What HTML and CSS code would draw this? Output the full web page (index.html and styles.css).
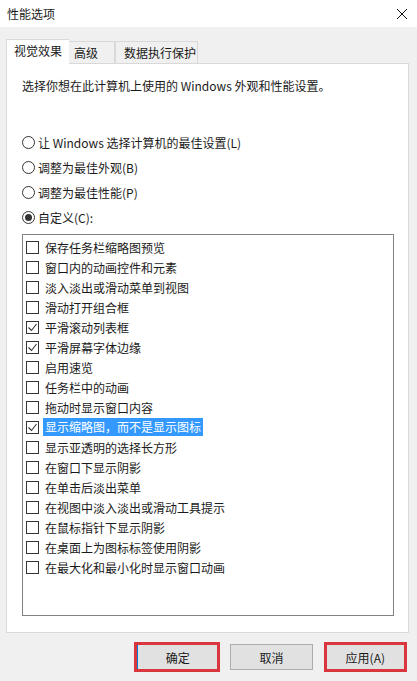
FILE: index.html
```html
<!DOCTYPE html>
<html>
<head>
    <title>性能选项</title>
    <link rel="stylesheet" href="styles.css">
</head>
<body>
    <div class="titlebar">
        <span class="title">性能选项</span>
        <svg class="close" width="12" height="12" viewBox="0 0 12 12">
            <path d="M1 1 L11 11 M11 1 L1 11" stroke="#111" stroke-width="1" fill="none"/>
        </svg>
    </div>

    <div class="tabs">
        <div class="tab tab-active">视觉效果</div>
        <div class="tab tab-adv">高级</div>
        <div class="tab tab-dep">数据执行保护</div>
    </div>

    <div class="panel">
        <p class="intro">选择你想在此计算机上使用的 Windows 外观和性能设置。</p>

        <div class="radios">
            <div class="radio-row"><span class="radio"></span>让 Windows 选择计算机的最佳设置(L)</div>
            <div class="radio-row"><span class="radio"></span>调整为最佳外观(B)</div>
            <div class="radio-row"><span class="radio"></span>调整为最佳性能(P)</div>
            <div class="radio-row"><span class="radio on"></span>自定义(C):</div>
        </div>

        <div class="listbox">
            <div class="item"><span class="check"></span>保存任务栏缩略图预览</div>
            <div class="item"><span class="check"></span>窗口内的动画控件和元素</div>
            <div class="item"><span class="check"></span>淡入淡出或滑动菜单到视图</div>
            <div class="item"><span class="check"></span>滑动打开组合框</div>
            <div class="item"><span class="check"><svg width="11" height="11" viewBox="0 0 11 11"><path d="M1.5 5.5 L4.5 8.5 L9.5 2" stroke="#333" stroke-width="1.1" fill="none"/></svg></span>平滑滚动列表框</div>
            <div class="item"><span class="check"><svg width="11" height="11" viewBox="0 0 11 11"><path d="M1.5 5.5 L4.5 8.5 L9.5 2" stroke="#333" stroke-width="1.1" fill="none"/></svg></span>平滑屏幕字体边缘</div>
            <div class="item"><span class="check"></span>启用速览</div>
            <div class="item"><span class="check"></span>任务栏中的动画</div>
            <div class="item"><span class="check"></span>拖动时显示窗口内容</div>
            <div class="item"><span class="check"><svg width="11" height="11" viewBox="0 0 11 11"><path d="M1.5 5.5 L4.5 8.5 L9.5 2" stroke="#333" stroke-width="1.1" fill="none"/></svg></span><span class="selected">显示缩略图，而不是显示图标</span></div>
            <div class="item"><span class="check"></span>显示亚透明的选择长方形</div>
            <div class="item"><span class="check"></span>在窗口下显示阴影</div>
            <div class="item"><span class="check"></span>在单击后淡出菜单</div>
            <div class="item"><span class="check"></span>在视图中淡入淡出或滑动工具提示</div>
            <div class="item"><span class="check"></span>在鼠标指针下显示阴影</div>
            <div class="item"><span class="check"></span>在桌面上为图标标签使用阴影</div>
            <div class="item"><span class="check"></span>在最大化和最小化时显示窗口动画</div>
        </div>
    </div>

    <div class="buttons">
        <button class="btn btn-default marked">确定</button>
        <button class="btn">取消</button>
        <button class="btn marked btn-apply">应用(A)</button>
    </div>
</body>
</html>
```

FILE: styles.css
```css
body {
    margin: 0;
    width: 417px;
    height: 681px;
    background: #f0f0f0;
    font-family: "Noto Sans CJK SC", "Microsoft YaHei", sans-serif;
    font-size: 12px;
    color: #1a1a1a;
    overflow: hidden;
}
.titlebar {
    height: 27px;
    background: #fff;
    display: flex;
    align-items: center;
    justify-content: space-between;
    padding: 0 8px 0 7px;
}
.title {
    line-height: 27px;
}
.close {
    margin-right: 1px;
}
.tabs {
    display: flex;
    align-items: flex-end;
    margin-top: 12px;
    padding-left: 6px;
    height: 24px;
}
.tab {
    box-sizing: border-box;
    border: 1px solid #d9d9d9;
    border-bottom: none;
    height: 22px;
    line-height: 21px;
    padding-left: 5px;
    background: #f0f0f0;
}
.tab-active {
    position: relative;
    z-index: 1;
    height: 25px;
    line-height: 22px;
    width: 63px;
    padding-left: 7px;
    background: #fff;
    margin-bottom: -1px;
    border-right: none;
}
.tab-adv {
    width: 46px;
    border-left: none;
}
.tab-dep {
    width: 83px;
    border-left: 1px solid #d9d9d9;
    padding-left: 8px;
}
.panel {
    box-sizing: border-box;
    margin-left: 6px;
    width: 403px;
    height: 570px;
    background: #fff;
    border: 1px solid #d9d9d9;
    padding: 12px 0 0 15px;
}
.intro {
    margin: 0;
    line-height: 20px;
}
.radios {
    margin-top: 34px;
}
.radio-row {
    display: flex;
    align-items: center;
    height: 25px;
}
.radio {
    box-sizing: border-box;
    width: 13px;
    height: 13px;
    border: 1px solid #333;
    border-radius: 50%;
    margin-right: 3px;
    display: flex;
    align-items: center;
    justify-content: center;
}
.radio.on::after {
    content: "";
    width: 7px;
    height: 7px;
    border-radius: 50%;
    background: #333;
}
.listbox {
    box-sizing: border-box;
    margin-top: 4px;
    width: 372px;
    height: 382px;
    border: 1px solid #828282;
    padding: 2px 0 0 3px;
}
.item {
    display: flex;
    align-items: center;
    height: 20px;
}
.check {
    box-sizing: border-box;
    width: 13px;
    height: 13px;
    border: 1px solid #333;
    margin-right: 6px;
    display: flex;
    align-items: center;
    justify-content: center;
}
.selected {
    background: #3399ff;
    color: #fff;
    line-height: 18px;
    padding: 0 2px;
    margin-left: -2px;
}
.buttons {
    display: flex;
    margin-top: 11px;
    padding-left: 136px;
}
.btn {
    box-sizing: border-box;
    width: 83px;
    height: 26px;
    background: #e1e1e1;
    border: 1px solid #adadad;
    font-family: inherit;
    font-size: 12px;
    color: #1a1a1a;
    margin-right: 12px;
    padding: 0;
}
.btn-default {
    border-left: 2px solid #0078d7;
}
.marked {
    outline: 3px solid #d9363e;
    outline-offset: -1px;
}
.btn-apply {
    margin-left: 1px;
    width: 80px;
}
```
